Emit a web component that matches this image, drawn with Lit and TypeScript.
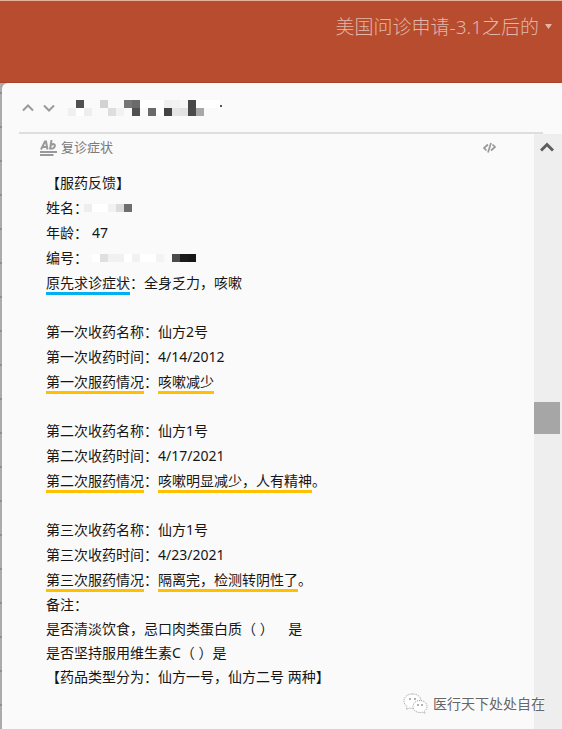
import { LitElement, html, css, svg } from "lit";
import { customElement } from "lit/decorators.js";

const CELL = 8;

const TITLE_MASK = [
  ["", "#505050", "", "", "#d2d2d2", "", "", "#767676", "#6a6a6a", "#fff", "#fff", "#fff", "#f0f0f0", "#f2f2f2", "#f6f6f6", "#484848", "#fff", "#fff", "#fff"],
  ["#f0f0f0", "#fff", "#eee", "", "", "#dedede", "#f2f2f2", "", "#505050", "", "#6a6a6a", "#fff", "#444", "#e5e5e5", "#e2e2e2", "#4a4a4a", "#a8a8a8", "", ""],
];
const NAME_MASK = [["#eee", "#fff", "#fff", "#f1f1f1", "#dcdcdc", "#6e6e6e"]];
const CODE_MASK = [["#fff", "#dfdfdf", "#f1f1f1", "#f1f1f1", "#fff", "#f2f2f2", "#fff", "#fff", "#f3f3f3", "", "#4a4a4a", "#1b1b1b", "#171717"]];

const mosaic = (rows: string[][]) => html`<svg class="mosaic" width=${rows[0].length * CELL} height=${rows.length * CELL} shape-rendering="crispEdges" aria-hidden="true">
    ${rows.map((row, y) =>
      row.map((fill, x) =>
        fill ? svg`<rect x=${x * CELL} y=${y * CELL} width=${CELL} height=${CELL} fill=${fill} />` : null
      )
    )}
  </svg>`;

interface Visit { nth: string; drug: string; date: string; result: string; end: string; }

const VISITS: Visit[] = [
  { nth: "一", drug: "仙方2号", date: "4/14/2012", result: "咳嗽减少", end: "" },
  { nth: "二", drug: "仙方1号", date: "4/17/2021", result: "咳嗽明显减少，人有精神", end: "。" },
  { nth: "三", drug: "仙方1号", date: "4/23/2021", result: "隔离完，检测转阴性了", end: "。" },
];

const NOTES = [
  "备注：",
  "是否清淡饮食，忌口肉类蛋白质（ ）    是",
  "是否坚持服用维生素C（ ）是",
  "【药品类型分为：仙方一号，仙方二号 两种】",
];

@customElement("app-root")
export class AppRoot extends LitElement {
  static styles = css`
    :host {
      display: flex;
      flex-direction: column;
      min-height: 100vh;
      box-sizing: border-box;
      position: relative;
      background: repeating-linear-gradient(#ababab 0 24px, #8e8e8e 24px 26px, #ababab 26px 34px);
      color: #161616;
      font: 14px/25px "Noto Sans", "Noto Sans CJK SC", sans-serif;
    }
    button {
      display: flex;
      align-items: center;
      justify-content: center;
      padding: 0;
      border: 0;
      background: none;
      color: inherit;
      font: inherit;
      cursor: pointer;
    }
    .banner {
      display: flex;
      justify-content: flex-end;
      align-items: flex-start;
      box-sizing: border-box;
      height: 83px;
      padding: 12px 9px 0;
      border-top: 1px solid #e6b19e;
      border-bottom: 1px solid #a8452b;
      background: #b84c2e;
    }
    .banner .picker {
      gap: 6px;
      color: #e0b8aa;
      font-size: 19px;
      font-weight: 300;
      line-height: 28px;
    }
    .body {
      flex: 1;
      display: flex;
      flex-direction: column;
      margin-left: 2px;
      border-top-left-radius: 6px;
      background: #fafafa;
    }
    .bar {
      display: flex;
      align-items: center;
      gap: 9px;
      height: 49px;
      margin-right: 19px;
      margin-left: 17px;
      padding-left: 3px;
      border-bottom: 2px solid #dedede;
    }
    .bar .mosaic { margin-left: 4px; }
    .nav { color: #9a9a9a; }
    .tick {
      width: 2px;
      height: 2px;
      margin: 0 0 4px -9px;
      background: #555;
    }
    .split { flex: 1; display: flex; }
    .content { flex: 1; min-width: 0; }
    .field {
      display: flex;
      align-items: center;
      gap: 4px;
      margin: 0;
      padding: 0 38px;
      color: #7b7b7b;
      font-size: 13px;
      font-weight: 400;
      line-height: 27px;
    }
    .field .code { margin-left: auto; }
    .record { padding: 9px 20px 20px 44px; }
    .group { margin-bottom: 24px; }
    .group.last { margin-bottom: 0; }
    .row { display: flex; align-items: center; height: 25px; white-space: nowrap; }
    .short { width: 38px; }
    .mark { position: relative; display: inline-block; }
    .mark::after {
      content: "";
      position: absolute;
      right: 0;
      bottom: 0;
      left: 0;
      height: 3px;
      background: #ffc000;
    }
    .mark.blue::after { background: #00b0f0; }
    .notes { padding-top: 1px; line-height: 24px; }
    .note { white-space: pre; }
    .mosaic { display: block; flex: none; }
    .inset { margin-left: 8px; }
    .scroll {
      position: relative;
      width: 28px;
      background: #eee;
      color: #5d5d5d;
    }
    .scroll button { width: 26px; height: 26px; }
    .thumb {
      position: absolute;
      top: 45%;
      left: 0;
      width: 26px;
      height: 32px;
      background: #a6a6a6;
    }
    .credit {
      position: absolute;
      right: 17px;
      bottom: 14px;
      display: flex;
      align-items: center;
      gap: 5px;
      color: #666;
      line-height: 22px;
      text-shadow: -1px -1px 0 #fff;
    }
  `;

  render() {
    return html`
      <header class="banner">
        <button class="picker">
          美国问诊申请-3.1之后的
          <svg width="8" height="6" viewBox="0 0 8 6"><path d="M0 0h7L3.500 5z" fill="currentColor" /></svg>
        </button>
      </header>
      <main class="body">
        <div class="bar">
          <button class="nav" aria-label="上一条">
            <svg width="12" height="10" viewBox="0 0 12 10" fill="none" stroke="currentColor" stroke-width="2"><path d="M1 7.500 6 2.500l5 5" /></svg>
          </button>
          <button class="nav" aria-label="下一条">
            <svg width="12" height="10" viewBox="0 0 12 10" fill="none" stroke="currentColor" stroke-width="2"><path d="M1 2.500 6 7.500l5-5" /></svg>
          </button>
          ${mosaic(TITLE_MASK)}
          <span class="tick"></span>
        </div>
        <div class="split">
          <div class="content">
            <h2 class="field">
              <svg width="17" height="16" viewBox="0 0 17 16" fill="none" stroke="#999" aria-hidden="true">
                <path d="M1 9.500 5 1.500h1l1.500 8M2.500 7h5" stroke-width="2" />
                <path d="M11.500 0 10 9.500M11 5c2-1.500 4.300-1 3.800 1.200s-2.800 3-4.300 1.800" stroke-width="2" />
                <path d="M0 12h17M0 15h13.500" stroke-width="2" />
              </svg>
              复诊症状
              <button class="code" aria-label="代码">
                <svg width="13" height="11" viewBox="0 0 13 11" fill="none" stroke="#999" stroke-width="1.700"><path d="M5 2.500 1 6l2.500 2.500M9.500 2.500 12 5 8 8.500M8 1 5 10.500" /></svg>
              </button>
            </h2>
            <div class="record">
              <div class="group">
                <div class="row">【服药反馈】</div>
                <div class="row"><span class="short">姓名：</span>${mosaic(NAME_MASK)}</div>
                <div class="row"><span class="short">年龄：</span><span class="inset">47</span></div>
                <div class="row"><span class="short">编号：</span><div class="inset">${mosaic(CODE_MASK)}</div></div>
                <div class="row"><span class="mark blue">原先求诊症状</span>：全身乏力，咳嗽</div>
              </div>
              ${VISITS.map((v, i) => html`
                <div class="group ${i === VISITS.length - 1 ? "last" : ""}">
                  <div class="row"><span>第${v.nth}次收药名称：</span>${v.drug}</div>
                  <div class="row"><span>第${v.nth}次收药时间：</span>${v.date}</div>
                  <div class="row"><span class="mark">第${v.nth}次服药情况</span>：<span class="mark">${v.result}</span>${v.end}</div>
                </div>`)}
              <div class="notes">
                ${NOTES.map((note) => html`<div class="note">${note}</div>`)}
              </div>
            </div>
          </div>
          <div class="scroll">
            <button aria-label="向上滚动">
              <svg width="14" height="12" viewBox="0 0 14 12" fill="none" stroke="currentColor" stroke-width="3"><path d="M1 9.500 7 3.500l6 6" /></svg>
            </button>
            <div class="thumb"></div>
          </div>
        </div>
      </main>
      <div class="credit">
        <svg width="25" height="22" viewBox="0 0 25 22" fill="#fff" stroke="#9a9a9a" stroke-width="1" stroke-dasharray="1 1" aria-hidden="true">
          <path d="M9.500 1C4.500 1 1 4 1 8c0 2.300 1.200 4.200 3 5.500L3.500 16.500 6.500 15c1 .3 2 .4 3 .4 5 0 8.500-3.200 8.500-7.400S14.500 1 9.500 1z" />
          <path d="M17 7.500c-4 0-7 2.700-7 6s3 6 7 6c.9 0 1.700-.1 2.500-.4l2.500 1.400-.6-2.300c1.600-1.100 2.600-2.800 2.600-4.700 0-3.300-3-6-7-6z" />
          <g fill="#999" stroke="none"><circle cx="7" cy="6" r="1" /><circle cx="12" cy="6" r="1" /><circle cx="15" cy="12" r="1" /><circle cx="19" cy="12" r="1" /></g>
        </svg>
        <span>医行天下处处自在</span>
      </div>
    `;
  }
}
